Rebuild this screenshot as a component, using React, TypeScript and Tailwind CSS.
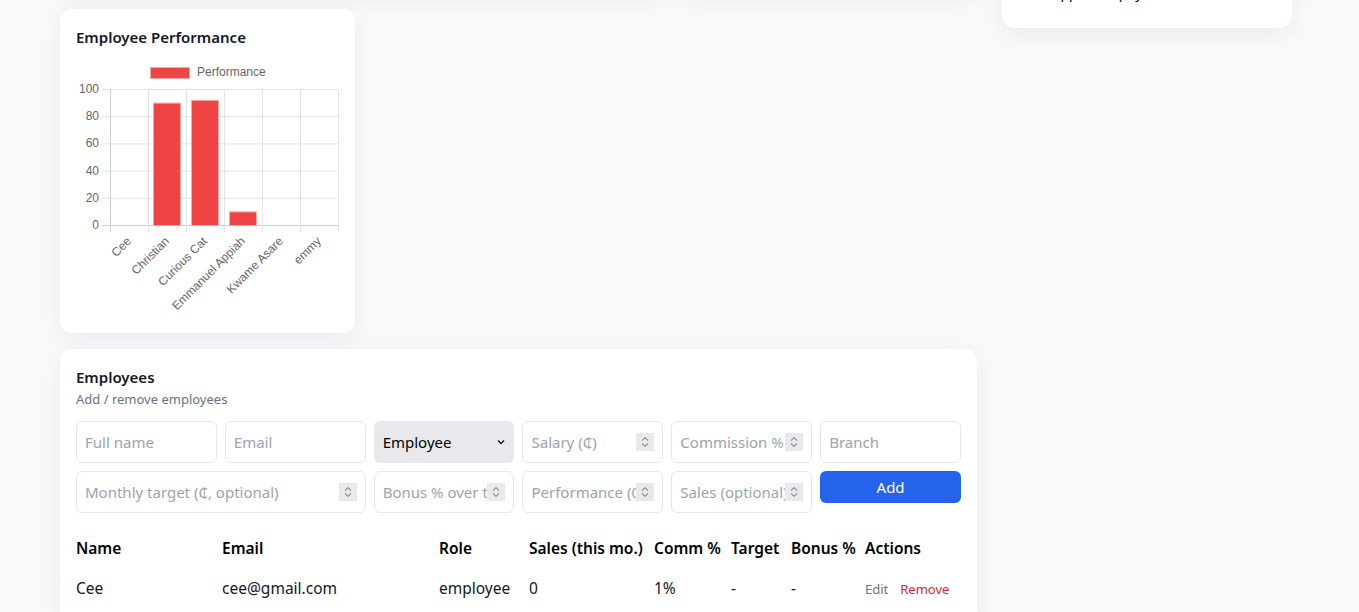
import { ReactNode } from 'react';

const names = ['Cee', 'Christian', 'Curious Cat', 'Emmanuel Appiah', 'Kwame Asare', 'emmy'];
const scores = [0, 90, 92, 10, 0, 0];

const SpinBox = () => (
  <span className="w-[18px] h-[18px] bg-[#e9e9ed] flex items-center justify-center shrink-0">
    <svg width="18" height="18" viewBox="0 0 18 18" fill="none" stroke="#5b5b66" strokeWidth="1">
      <path d="M6 7.5 L9 4.6 L12 7.5" />
      <path d="M6 10.5 L9 13.4 L12 10.5" />
    </svg>
  </span>
);

const NumberField = ({ placeholder, className = '' }: { placeholder: string; className?: string }) => (
  <div className={`h-[42px] border border-[#e5e7eb] rounded-md bg-white flex items-center pl-2 pr-2 ${className}`}>
    <input
      type="text"
      placeholder={placeholder}
      className="flex-1 min-w-0 outline-none bg-transparent text-[15px] placeholder:text-[#9ca3af]"
    />
    <SpinBox />
  </div>
);

const TextField = ({ placeholder }: { placeholder: string }) => (
  <input
    type="text"
    placeholder={placeholder}
    className="h-[42px] border border-[#e5e7eb] rounded-md bg-white px-2 outline-none text-[15px] placeholder:text-[#9ca3af] min-w-0"
  />
);

const Card = ({ children, className = '' }: { children?: ReactNode; className?: string }) => (
  <div className={`bg-white rounded-xl shadow-[0_6px_24px_rgba(15,23,42,0.06)] ${className}`}>{children}</div>
);

const PerformanceChart = () => {
  const y = (v: number) => 173 - 1.36 * v;
  const ticks = [0, 20, 40, 60, 80, 100];
  const cols = [0, 1, 2, 3, 4, 5, 6];
  return (
    <svg width="263" height="265" viewBox="0 0 263 265" className="block font-['Liberation_Sans',Arial,sans-serif]">
      <rect x="74.5" y="15.5" width="39" height="11" fill="#ef4444" stroke="#fca5a5" />
      <text x="121" y="24" fontSize="12" fill="#666">Performance</text>

      {ticks.map((t) => (
        <g key={t}>
          <line x1="26" x2="263" y1={y(t) + 0.5} y2={y(t) + 0.5} stroke={t === 0 ? '#cfcfcf' : '#e4e4e4'} />
          <text x="23" y={y(t) + 4} fontSize="12" fill="#666" textAnchor="end">
            {t}
          </text>
        </g>
      ))}
      {cols.map((c) => (
        <line
          key={c}
          x1={34 + 38 * c + 0.5}
          x2={34 + 38 * c + 0.5}
          y1="37"
          y2="180"
          stroke={c === 0 ? '#cfcfcf' : '#e4e4e4'}
        />
      ))}

      {scores.map((s, i) =>
        s > 0 ? (
          <rect
            key={i}
            x={34 + 38 * i + 5.5}
            y={y(s) + 0.5}
            width="27"
            height={173 - y(s)}
            fill="#ef4444"
            stroke="#fca5a5"
          />
        ) : null
      )}

      {names.map((n, i) => (
        <text
          key={n}
          transform={`translate(${34 + 38 * i + 19}, 187) rotate(-45)`}
          fontSize="12"
          fill="#666"
          textAnchor="end"
          dy="4"
        >
          {n}
        </text>
      ))}
    </svg>
  );
};

export default function App() {
  return (
    <div className="min-h-screen bg-[#f8f9fb] overflow-hidden font-['Noto_Sans',sans-serif] text-[#111827]">
      <div className="-mt-[107px] pl-[60px] flex gap-[25px] items-start">
        <div className="w-[917px] flex flex-col gap-4">
          <div className="grid grid-cols-3 gap-4">
            <Card className="col-span-2 h-[100px]" />
            <Card className="h-[100px]" />
          </div>

          <div className="grid grid-cols-3 gap-4">
            <Card className="p-4">
              <h2 className="text-[15px] leading-6 font-semibold">Employee Performance</h2>
              <div className="mt-[3px]">
                <PerformanceChart />
              </div>
            </Card>
          </div>

          <Card className="p-4">
            <h2 className="text-[15px] leading-6 font-semibold">Employees</h2>
            <p className="text-[13px] leading-5 text-[#6b7280]">Add / remove employees</p>

            <div className="mt-3 grid grid-cols-6 gap-2">
              <TextField placeholder="Full name" />
              <TextField placeholder="Email" />
              <div className="h-[42px] rounded-md bg-[#e9e9ed] flex items-center justify-between pl-[9px] pr-[9px]">
                <span className="text-[15px] text-black">Employee</span>
                <svg width="8" height="6" viewBox="0 0 8 6" fill="none" stroke="#111" strokeWidth="1.3">
                  <path d="M1 1.5 L4 4.5 L7 1.5" />
                </svg>
              </div>
              <NumberField placeholder="Salary (₵)" />
              <NumberField placeholder="Commission %" />
              <TextField placeholder="Branch" />

              <NumberField placeholder="Monthly target (₵, optional)" className="col-span-2" />
              <NumberField placeholder="Bonus % over target" />
              <NumberField placeholder="Performance (0-100)" />
              <NumberField placeholder="Sales (optional)" />
              <button className="h-8 self-start rounded-md bg-[#2563eb] text-white text-[15px]">Add</button>
            </div>

            <table className="mt-4 w-[886px] table-fixed text-left text-[15.5px]">
              <colgroup>
                <col className="w-[146px]" />
                <col className="w-[217px]" />
                <col className="w-[90px]" />
                <col className="w-[125px]" />
                <col className="w-[77px]" />
                <col className="w-[60px]" />
                <col className="w-[74px]" />
                <col className="w-[97px]" />
              </colgroup>
              <thead>
                <tr className="h-10">
                  <th className="font-semibold whitespace-nowrap text-black">Name</th>
                  <th className="font-semibold whitespace-nowrap text-black">Email</th>
                  <th className="font-semibold whitespace-nowrap text-black">Role</th>
                  <th className="font-semibold whitespace-nowrap text-black">Sales (this mo.)</th>
                  <th className="font-semibold whitespace-nowrap text-black">Comm %</th>
                  <th className="font-semibold whitespace-nowrap text-black">Target</th>
                  <th className="font-semibold whitespace-nowrap text-black">Bonus %</th>
                  <th className="font-semibold whitespace-nowrap text-black">Actions</th>
                </tr>
              </thead>
              <tbody>
                <tr className="h-10">
                  <td>Cee</td>
                  <td>cee@gmail.com</td>
                  <td>employee</td>
                  <td>0</td>
                  <td>1%</td>
                  <td>-</td>
                  <td>-</td>
                  <td className="whitespace-nowrap">
                    <button className="text-[13px] text-[#6b7280] mr-3">Edit</button>
                    <button className="text-[13px] text-[#dc2626]">Remove</button>
                  </td>
                </tr>
              </tbody>
            </table>
          </Card>
        </div>

        <div className="w-[290px]">
          <Card className="h-[135px] flex flex-col justify-end items-center pb-[25px]">
            <p className="text-sm leading-5 text-black">Approved payroll this month,</p>
          </Card>
        </div>
      </div>
    </div>
  );
}
